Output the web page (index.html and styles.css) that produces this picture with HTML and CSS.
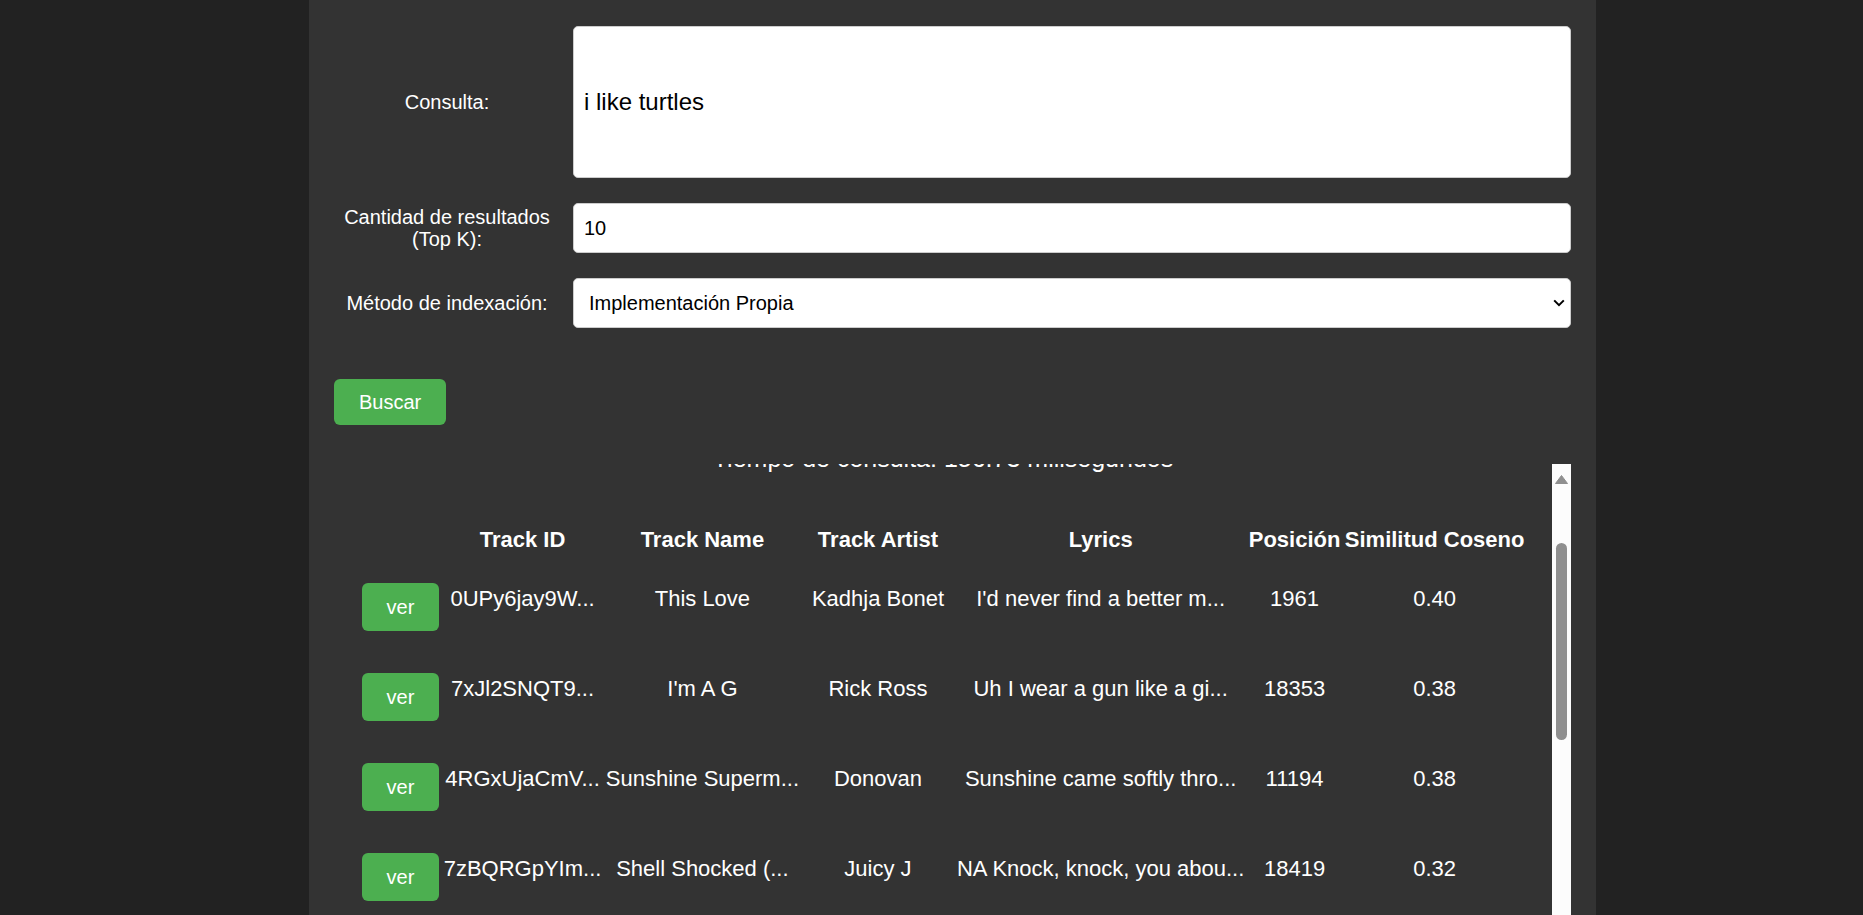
FILE: index.html
```html
<!DOCTYPE html>
<html lang="es">
<head>
<meta charset="utf-8">
<title>Buscador de letras</title>
<link rel="stylesheet" href="styles.css">
</head>
<body>
<div class="container">
  <form class="search-form">
    <div class="field">
      <label class="field-label">Consulta:</label>
      <input class="text-input query-input" type="text" value="i like turtles">
    </div>
    <div class="field">
      <label class="field-label">Cantidad de resultados (Top K):</label>
      <input class="text-input number-input" type="number" value="10">
    </div>
    <div class="field">
      <label class="field-label">Método de indexación:</label>
      <div class="select-wrap">
        <select class="select-input">
          <option>Implementación Propia</option>
        </select>
        <svg class="select-arrow" width="12" height="8" viewBox="0 0 12 8"><path d="M1.2 1.4 L6 6.2 L10.8 1.4" fill="none" stroke="#000" stroke-width="2"/></svg>
      </div>
    </div>
    <button class="btn btn-search" type="button">Buscar</button>
  </form>

  <div class="results-frame">
    <div class="results" id="results">
      <p class="query-time">Tiempo de consulta: 156.73 milisegundos</p>
      <table class="results-table">
        <thead>
          <tr>
            <th></th>
            <th>Track ID</th>
            <th>Track Name</th>
            <th>Track Artist</th>
            <th>Lyrics</th>
            <th>Posición</th>
            <th>Similitud Coseno</th>
          </tr>
        </thead>
        <tbody>
          <tr><td><button class="btn btn-ver" type="button">ver</button></td><td>0UPy6jay9W...</td><td>This Love</td><td>Kadhja Bonet</td><td>I'd never find a better m...</td><td>1961</td><td>0.40</td></tr>
          <tr><td><button class="btn btn-ver" type="button">ver</button></td><td>7xJl2SNQT9...</td><td>I'm A G</td><td>Rick Ross</td><td>Uh I wear a gun like a gi...</td><td>18353</td><td>0.38</td></tr>
          <tr><td><button class="btn btn-ver" type="button">ver</button></td><td>4RGxUjaCmV...</td><td>Sunshine Superm...</td><td>Donovan</td><td>Sunshine came softly thro...</td><td>11194</td><td>0.38</td></tr>
          <tr><td><button class="btn btn-ver" type="button">ver</button></td><td>7zBQRGpYIm...</td><td>Shell Shocked (...</td><td>Juicy J</td><td>NA Knock, knock, you abou...</td><td>18419</td><td>0.32</td></tr>
          <tr><td><button class="btn btn-ver" type="button">ver</button></td><td>2fxnhksl0b...</td><td>Little Lies</td><td>Fleetwood Mac</td><td>If I could turn the page i...</td><td>4502</td><td>0.31</td></tr>
          <tr><td><button class="btn btn-ver" type="button">ver</button></td><td>5sick3xzvt...</td><td>Turtle Song</td><td>Eels</td><td>I like the way it feels...</td><td>9127</td><td>0.30</td></tr>
          <tr><td><button class="btn btn-ver" type="button">ver</button></td><td>1ajsrtkl9f...</td><td>Slow Ride</td><td>Foghat</td><td>Slow ride, take it easy s...</td><td>15530</td><td>0.29</td></tr>
          <tr><td><button class="btn btn-ver" type="button">ver</button></td><td>6qjltr0ekz...</td><td>Like This</td><td>Kelly Rowland</td><td>I like this, like this li...</td><td>2876</td><td>0.28</td></tr>
          <tr><td><button class="btn btn-ver" type="button">ver</button></td><td>3tdrl1fbsi...</td><td>Still Life</td><td>Blur</td><td>It's a still life, in a li...</td><td>13011</td><td>0.27</td></tr>
          <tr><td><button class="btn btn-ver" type="button">ver</button></td><td>0lkfsjti8r...</td><td>Sea Shells</td><td>Tori Kelly</td><td>I like it slow by the sea...</td><td>7748</td><td>0.27</td></tr>
        </tbody>
      </table>
    </div>
    <div class="scrollbar" aria-hidden="true">
      <svg class="scrollbar-arrow" width="13" height="9" viewBox="0 0 13 9"><path d="M6.5 0.5 L12.5 8.5 L0.5 8.5 Z" fill="#8f8f8f" stroke="#8f8f8f" stroke-linejoin="round"/></svg>
      <div class="scrollbar-thumb"></div>
    </div>
  </div>
</div>
<script src="script.js"></script>
</body>
</html>
```

FILE: styles.css
```css
html, body {
  margin: 0;
  padding: 0;
  overflow: hidden;
  background: #222222;
  font-family: "Liberation Sans", Arial, sans-serif;
  color: #ffffff;
}

.container {
  box-sizing: border-box;
  width: 1287px;
  min-height: 100vh;
  margin-left: 309px;
  padding: 26px 25px 0 25px;
  background: #333333;
}

.search-form {
  display: flex;
  flex-direction: column;
  align-items: flex-start;
}

.field {
  display: flex;
  align-items: center;
  width: 100%;
  margin-bottom: 25px;
}

.field-label {
  flex: 0 0 226px;
  margin-right: 13px;
  text-align: center;
  font-size: 20px;
  line-height: 22px;
}

.text-input {
  flex: 1;
  box-sizing: border-box;
  height: 50px;
  margin: 0;
  padding: 0 10px;
  border: 1px solid #cccccc;
  border-radius: 5px;
  background: #ffffff;
  color: #000000;
  font-family: "Liberation Sans", Arial, sans-serif;
  font-size: 20px;
  outline: none;
}

.query-input {
  height: 152px;
  font-size: 24px;
}

.number-input {
  -moz-appearance: textfield;
  appearance: textfield;
}

.number-input::-webkit-outer-spin-button,
.number-input::-webkit-inner-spin-button {
  -webkit-appearance: none;
  margin: 0;
}

.select-wrap {
  position: relative;
  flex: 1;
  display: flex;
}

.select-input {
  flex: 1;
  box-sizing: border-box;
  height: 50px;
  margin: 0;
  padding: 0 15px;
  border: 1px solid #cccccc;
  border-radius: 5px;
  background: #ffffff;
  color: #000000;
  font-family: "Liberation Sans", Arial, sans-serif;
  font-size: 20px;
  -webkit-appearance: none;
  appearance: none;
  outline: none;
}

.select-arrow {
  position: absolute;
  right: 6px;
  top: 21px;
  pointer-events: none;
}

.btn {
  border: none;
  border-radius: 6px;
  background: #4caf50;
  color: #ffffff;
  font-family: "Liberation Sans", Arial, sans-serif;
  font-size: 20px;
  line-height: 24px;
  cursor: pointer;
}

.btn-search {
  margin-top: 26px;
  padding: 11px 25px;
}

.results-frame {
  display: flex;
  height: 496px;
  margin-top: 39px;
}

.results {
  flex: 1;
  box-sizing: border-box;
  padding-top: 128px;
  overflow: hidden;
}

.scrollbar {
  flex: 0 0 19px;
  display: flex;
  flex-direction: column;
  align-items: center;
  background: #fcfcfc;
}

.scrollbar-arrow {
  display: block;
  margin-top: 11px;
}

.scrollbar-thumb {
  width: 11px;
  height: 197px;
  margin-top: 59px;
  border-radius: 6px;
  background: #8f8f8f;
}

.query-time {
  margin: 0 0 52px 0;
  text-align: center;
  font-size: 25px;
}

.results-table {
  margin: 0 auto;
  border-spacing: 2px;
  font-size: 22px;
}

.results-table th {
  padding: 0 1.2px;
  font-weight: bold;
  text-align: center;
}

.results-table td {
  padding: 12px 1.2px;
  text-align: center;
  white-space: nowrap;
}

.btn-ver {
  display: block;
  margin-top: 16px;
  padding: 12px 25px;
}
```

FILE: script.js
```js
document.getElementById('results').scrollTop = 148;
```
